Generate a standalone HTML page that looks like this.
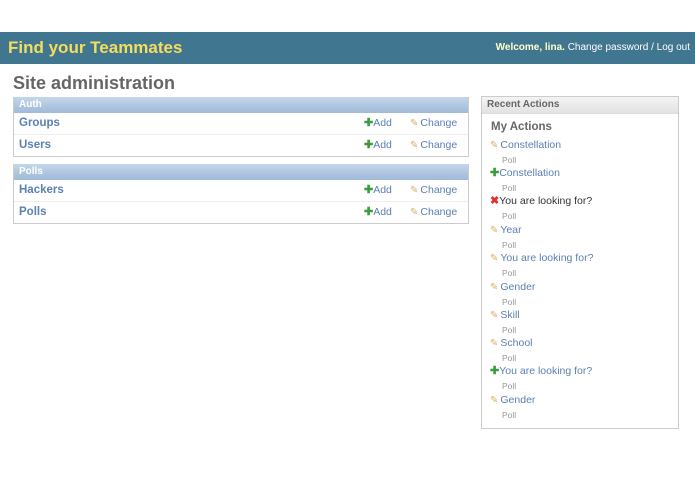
<!DOCTYPE html>
<html><head><style>
body{margin:0;width:695px;height:494px;background:#fff;font-family:"Liberation Sans",sans-serif;position:relative;overflow:hidden}
.hdr{position:absolute;left:0;top:32px;width:695px;height:32px;background:#417690}
.brand{position:absolute;left:8px;top:6px;color:#f5dd5d;font-size:17px;font-weight:bold}
.user{position:absolute;right:5px;top:10px;color:#ffc;font-size:10px;font-weight:bold}
.user span{color:#fff;font-weight:normal}
h1{position:absolute;left:13px;top:73px;margin:0;font-size:18px;color:#666;font-weight:bold}
.mod{position:absolute;left:13px;width:454px;border:1px solid #ccc;border-top:none}
.cap{height:16px;background:linear-gradient(#c4d6ea,#9fb9d8);color:#fff;font-size:10px;font-weight:bold;line-height:16px;padding-left:5px}
.row{height:21px;line-height:21px;border-bottom:1px solid #eee;position:relative;font-size:11.5px}
.row:last-child{border-bottom:none}
.row .n{position:absolute;left:5px;top:0;color:#5b80b2;font-weight:bold}
.row .a{position:absolute;left:350px;top:0;color:#5b80b2;font-size:10.5px}
.row .c{position:absolute;left:396px;top:0;color:#5b80b2;font-size:10.5px}
.plus{color:#3a9c3a;font-weight:bold;font-size:11px}
.pen{color:#d9b060;font-size:10px;margin-right:2px}
.x{color:#d33;font-weight:bold;font-size:11px}
.ra{position:absolute;left:481px;top:96px;width:196px;height:331px;border:1px solid #ccc}
.ra .cap2{height:16px;background:linear-gradient(#f4f4f4,#e2e2e2);color:#666;font-size:10px;font-weight:bold;line-height:16px;padding-left:5px;border-bottom:1px solid #ddd}
.ma{position:absolute;left:9px;top:24px;font-size:11.5px;font-weight:bold;color:#666}
.it{position:absolute;left:8px;font-size:10.5px;line-height:13px;color:#5b80b2;white-space:nowrap}
.it .p{display:block;color:#999;font-size:8.5px;line-height:10px;margin-left:12px;margin-top:3px}
</style></head><body>
<div class="hdr"><div class="brand">Find your Teammates</div><div class="user">Welcome, lina. <span>Change password / Log out</span></div></div>
<h1>Site administration</h1>
<div class="mod" style="top:97px"><div class="cap">Auth</div>
<div class="row"><span class="n">Groups</span><span class="a"><span class="plus">✚</span>Add</span><span class="c"><span class="pen">✎</span>Change</span></div>
<div class="row"><span class="n">Users</span><span class="a"><span class="plus">✚</span>Add</span><span class="c"><span class="pen">✎</span>Change</span></div></div>
<div class="mod" style="top:164px"><div class="cap">Polls</div>
<div class="row"><span class="n">Hackers</span><span class="a"><span class="plus">✚</span>Add</span><span class="c"><span class="pen">✎</span>Change</span></div>
<div class="row"><span class="n">Polls</span><span class="a"><span class="plus">✚</span>Add</span><span class="c"><span class="pen">✎</span>Change</span></div></div>
<div class="ra"><div class="cap2">Recent Actions</div><div class="ma">My Actions</div>
<div class="it" style="top:42px"><span class="pen">✎</span>Constellation<span class="p">Poll</span></div>
<div class="it" style="top:70px"><span class="plus">✚</span>Constellation<span class="p">Poll</span></div>
<div class="it" style="top:98px;color:#333"><span class="x">✖</span>You are looking for?<span class="p">Poll</span></div>
<div class="it" style="top:127px"><span class="pen">✎</span>Year<span class="p">Poll</span></div>
<div class="it" style="top:155px"><span class="pen">✎</span>You are looking for?<span class="p">Poll</span></div>
<div class="it" style="top:184px"><span class="pen">✎</span>Gender<span class="p">Poll</span></div>
<div class="it" style="top:212px"><span class="pen">✎</span>Skill<span class="p">Poll</span></div>
<div class="it" style="top:240px"><span class="pen">✎</span>School<span class="p">Poll</span></div>
<div class="it" style="top:268px"><span class="plus">✚</span>You are looking for?<span class="p">Poll</span></div>
<div class="it" style="top:297px"><span class="pen">✎</span>Gender<span class="p">Poll</span></div>
</div>
</body></html>
